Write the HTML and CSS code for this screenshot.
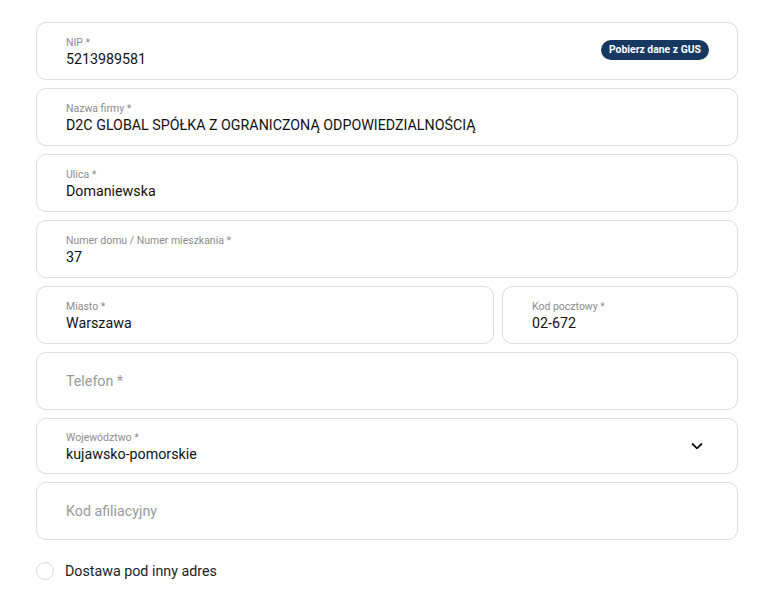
FILE: index.html
```html
<!DOCTYPE html>
<html lang="pl">
<head>
<meta charset="utf-8">
<title>Formularz</title>
<link rel="stylesheet" href="styles.css">
</head>
<body>
<form class="form">
  <div class="field">
    <div class="field-body">
      <div class="label">NIP *</div>
      <div class="value">5213989581</div>
    </div>
    <button type="button" class="gus-btn">Pobierz dane z GUS</button>
  </div>
  <div class="field">
    <div class="field-body">
      <div class="label">Nazwa firmy *</div>
      <div class="value">D2C GLOBAL SPÓŁKA Z OGRANICZONĄ ODPOWIEDZIALNOŚCIĄ</div>
    </div>
  </div>
  <div class="field">
    <div class="field-body">
      <div class="label">Ulica *</div>
      <div class="value">Domaniewska</div>
    </div>
  </div>
  <div class="field">
    <div class="field-body">
      <div class="label">Numer domu / Numer mieszkania *</div>
      <div class="value">37</div>
    </div>
  </div>
  <div class="row">
    <div class="field city">
      <div class="field-body">
        <div class="label">Miasto *</div>
        <div class="value">Warszawa</div>
      </div>
    </div>
    <div class="field zip">
      <div class="field-body">
        <div class="label">Kod pocztowy *</div>
        <div class="value">02-672</div>
      </div>
    </div>
  </div>
  <div class="field">
    <div class="placeholder">Telefon *</div>
  </div>
  <div class="field select">
    <div class="field-body">
      <div class="label">Województwo *</div>
      <div class="value">kujawsko-pomorskie</div>
    </div>
    <svg class="chevron" width="14" height="14" viewBox="0 0 14 14" aria-hidden="true">
      <path d="M2.5 5 L7 9.3 L11.5 5" fill="none" stroke="#111" stroke-width="1.8" stroke-linecap="round" stroke-linejoin="round"/>
    </svg>
  </div>
  <div class="field">
    <div class="placeholder">Kod afiliacyjny</div>
  </div>
  <label class="check">
    <span class="check-box"></span>
    <span class="check-text">Dostawa pod inny adres</span>
  </label>
</form>
</body>
</html>
```
FILE: styles.css
```css
* { box-sizing: border-box; }
html, body { margin: 0; padding: 0; background: #fff; }
body {
  font-family: Roboto, "Liberation Sans", Arial, sans-serif;
  color: #1a1a1a;
}
.form {
  width: 702px;
  margin: 22px 0 0 36px;
  display: flex;
  flex-direction: column;
  gap: 8px;
}
.field {
  height: 58px;
  border: 1px solid #dcdcdc;
  border-radius: 10px;
  padding: 0 28px 0 29px;
  display: flex;
  align-items: center;
  background: #fff;
}
.field-body {
  flex: 1;
  min-width: 0;
  align-self: stretch;
  padding-top: 14px;
}
.label {
  font-size: 10.5px;
  line-height: 12px;
  color: #8c8c8c;
}
.value {
  font-size: 14.25px;
  line-height: 18px;
  margin-top: 1px;
  color: #111;
}
.placeholder {
  font-size: 14.25px;
  color: #999;
  line-height: 18px;
}
.gus-btn {
  font-family: Roboto, "Liberation Sans", Arial, sans-serif;
  font-size: 10.4px;
  font-weight: 700;
  color: #fff;
  background: #173961;
  border: 0;
  border-radius: 10px;
  height: 20px;
  width: 108px;
  padding: 0;
  margin-top: -3px;
  cursor: pointer;
  white-space: nowrap;
}
.row {
  display: flex;
  gap: 8px;
}
.city { width: 458px; }
.zip { flex: 1; }
.select { height: 56px; padding-right: 33px; }
.select .field-body { padding-top: 13px; }
.chevron { display: block; }
.check {
  display: flex;
  align-items: center;
  gap: 11px;
  margin-top: 14px;
  height: 18px;
}
.check-box {
  width: 18px;
  height: 18px;
  border: 1px solid #dadada;
  border-radius: 50%;
  flex: none;
}
.check-text {
  font-size: 14.25px;
  color: #222;
  line-height: 18px;
}
```
